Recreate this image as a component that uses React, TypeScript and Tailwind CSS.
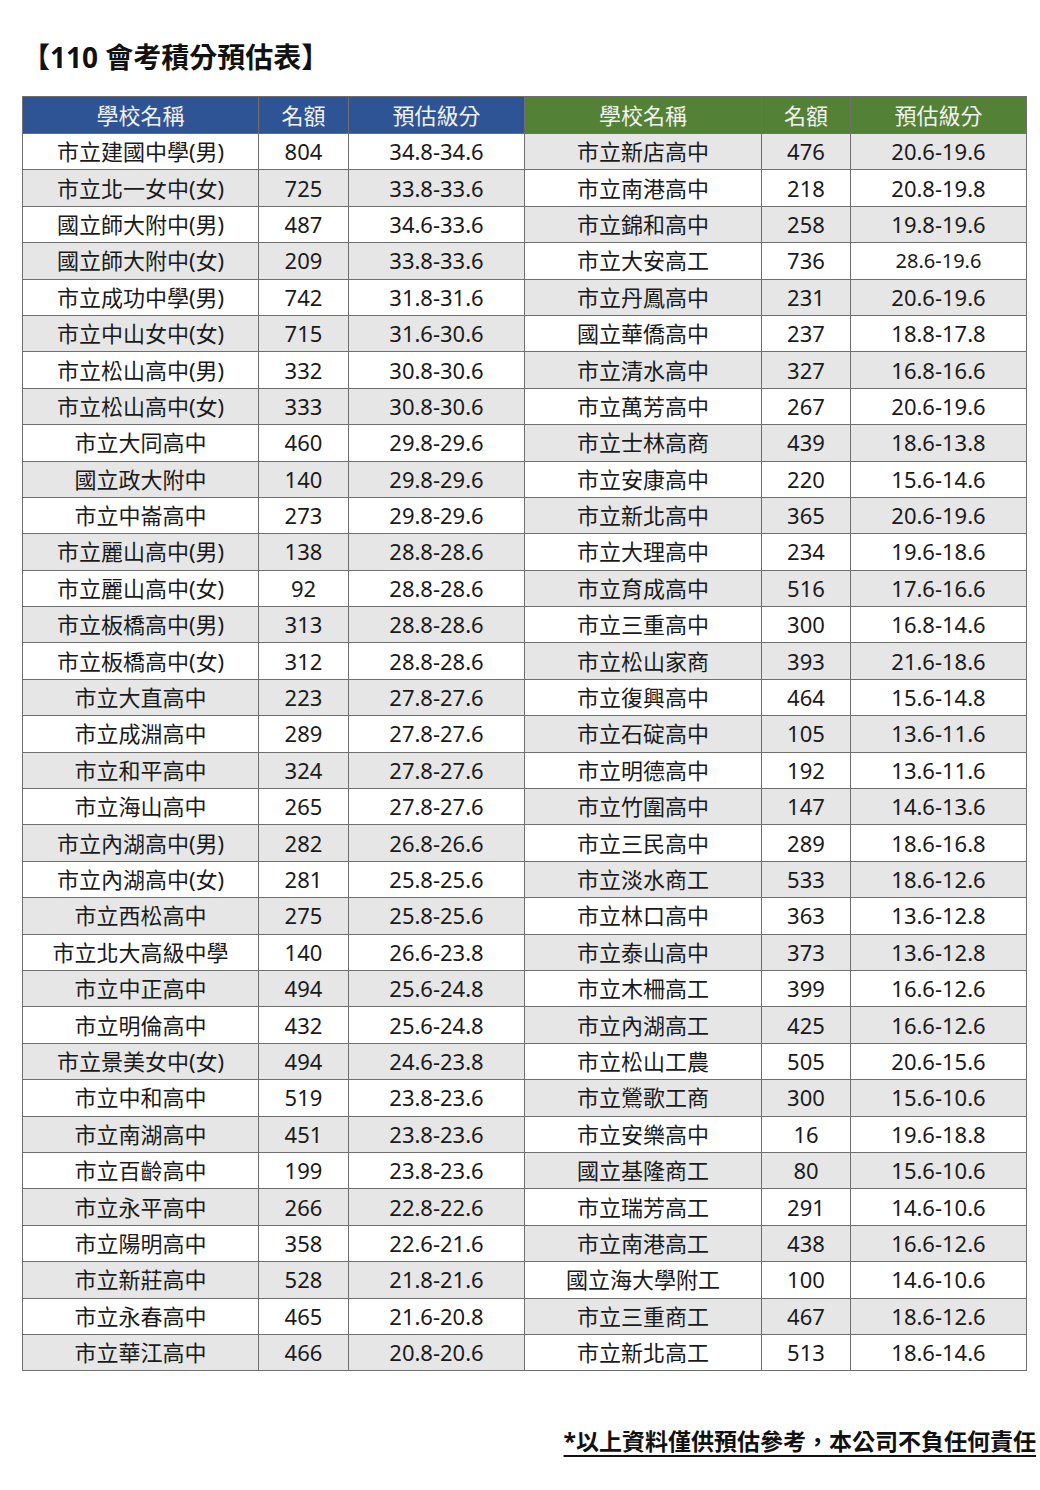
const LEFT: [string, string, string][] = [
  ["市立建國中學(男)", "804", "34.8-34.6"],
  ["市立北一女中(女)", "725", "33.8-33.6"],
  ["國立師大附中(男)", "487", "34.6-33.6"],
  ["國立師大附中(女)", "209", "33.8-33.6"],
  ["市立成功中學(男)", "742", "31.8-31.6"],
  ["市立中山女中(女)", "715", "31.6-30.6"],
  ["市立松山高中(男)", "332", "30.8-30.6"],
  ["市立松山高中(女)", "333", "30.8-30.6"],
  ["市立大同高中", "460", "29.8-29.6"],
  ["國立政大附中", "140", "29.8-29.6"],
  ["市立中崙高中", "273", "29.8-29.6"],
  ["市立麗山高中(男)", "138", "28.8-28.6"],
  ["市立麗山高中(女)", "92", "28.8-28.6"],
  ["市立板橋高中(男)", "313", "28.8-28.6"],
  ["市立板橋高中(女)", "312", "28.8-28.6"],
  ["市立大直高中", "223", "27.8-27.6"],
  ["市立成淵高中", "289", "27.8-27.6"],
  ["市立和平高中", "324", "27.8-27.6"],
  ["市立海山高中", "265", "27.8-27.6"],
  ["市立內湖高中(男)", "282", "26.8-26.6"],
  ["市立內湖高中(女)", "281", "25.8-25.6"],
  ["市立西松高中", "275", "25.8-25.6"],
  ["市立北大高級中學", "140", "26.6-23.8"],
  ["市立中正高中", "494", "25.6-24.8"],
  ["市立明倫高中", "432", "25.6-24.8"],
  ["市立景美女中(女)", "494", "24.6-23.8"],
  ["市立中和高中", "519", "23.8-23.6"],
  ["市立南湖高中", "451", "23.8-23.6"],
  ["市立百齡高中", "199", "23.8-23.6"],
  ["市立永平高中", "266", "22.8-22.6"],
  ["市立陽明高中", "358", "22.6-21.6"],
  ["市立新莊高中", "528", "21.8-21.6"],
  ["市立永春高中", "465", "21.6-20.8"],
  ["市立華江高中", "466", "20.8-20.6"],
];

const RIGHT: [string, string, string][] = [
  ["市立新店高中", "476", "20.6-19.6"],
  ["市立南港高中", "218", "20.8-19.8"],
  ["市立錦和高中", "258", "19.8-19.6"],
  ["市立大安高工", "736", "28.6-19.6"],
  ["市立丹鳳高中", "231", "20.6-19.6"],
  ["國立華僑高中", "237", "18.8-17.8"],
  ["市立清水高中", "327", "16.8-16.6"],
  ["市立萬芳高中", "267", "20.6-19.6"],
  ["市立士林高商", "439", "18.6-13.8"],
  ["市立安康高中", "220", "15.6-14.6"],
  ["市立新北高中", "365", "20.6-19.6"],
  ["市立大理高中", "234", "19.6-18.6"],
  ["市立育成高中", "516", "17.6-16.6"],
  ["市立三重高中", "300", "16.8-14.6"],
  ["市立松山家商", "393", "21.6-18.6"],
  ["市立復興高中", "464", "15.6-14.8"],
  ["市立石碇高中", "105", "13.6-11.6"],
  ["市立明德高中", "192", "13.6-11.6"],
  ["市立竹圍高中", "147", "14.6-13.6"],
  ["市立三民高中", "289", "18.6-16.8"],
  ["市立淡水商工", "533", "18.6-12.6"],
  ["市立林口高中", "363", "13.6-12.8"],
  ["市立泰山高中", "373", "13.6-12.8"],
  ["市立木柵高工", "399", "16.6-12.6"],
  ["市立內湖高工", "425", "16.6-12.6"],
  ["市立松山工農", "505", "20.6-15.6"],
  ["市立鶯歌工商", "300", "15.6-10.6"],
  ["市立安樂高中", "16", "19.6-18.8"],
  ["國立基隆商工", "80", "15.6-10.6"],
  ["市立瑞芳高工", "291", "14.6-10.6"],
  ["市立南港高工", "438", "16.6-12.6"],
  ["國立海大學附工", "100", "14.6-10.6"],
  ["市立三重商工", "467", "18.6-12.6"],
  ["市立新北高工", "513", "18.6-14.6"],
];

const FONT = { fontFamily: '"Noto Sans", "Noto Sans CJK TC", sans-serif' };

function HeadCells({ bg }: { bg: string }) {
  return (
    <>
      <th className={`${bg} border border-[#6f6f6f] font-normal text-[#f2f2f2]`}>學校名稱</th>
      <th className={`${bg} border border-[#6f6f6f] font-normal text-[#f2f2f2]`}>名額</th>
      <th className={`${bg} border border-[#6f6f6f] font-normal text-[#f2f2f2]`}>預估級分</th>
    </>
  );
}

export default function App() {
  return (
    <div className="w-[1040px] min-h-[1490px] bg-white pl-[22px] text-[#1a1a1a]" style={FONT}>
      <h1 className="pt-[38px] text-[28px] font-bold leading-[38px] text-[#111]">【110 會考積分預估表】</h1>

      <table className="mt-[20px] w-[1004px] table-fixed border-collapse border border-[#5f5f5f] text-center text-[22px]">
        <colgroup>
          <col className="w-[236px]" />
          <col className="w-[90px]" />
          <col className="w-[176px]" />
          <col className="w-[237px]" />
          <col className="w-[89px]" />
          <col className="w-[176px]" />
        </colgroup>
        <thead>
          <tr className="h-[37px]">
            <HeadCells bg="bg-[#2f5496]" />
            <HeadCells bg="bg-[#538135]" />
          </tr>
        </thead>
        <tbody>
          {LEFT.map((l, i) => {
            const r = RIGHT[i];
            const leftBg = i % 2 === 1 ? "bg-[#e6e6e6]" : "bg-white";
            const rightBg = i % 2 === 0 ? "bg-[#e6e6e6]" : "bg-white";
            return (
              <tr key={i} className="h-[36.4px]">
                <td className={`${leftBg} border border-[#6f6f6f] whitespace-nowrap`}>{l[0]}</td>
                <td className={`${leftBg} border border-[#6f6f6f]`}>{l[1]}</td>
                <td className={`${leftBg} border border-[#6f6f6f]`}>{l[2]}</td>
                <td className={`${rightBg} border border-[#6f6f6f] whitespace-nowrap`}>{r[0]}</td>
                <td className={`${rightBg} border border-[#6f6f6f]`}>{r[1]}</td>
                <td className={`${rightBg} border border-[#6f6f6f] ${i === 3 ? "text-[20px]" : ""}`}>{r[2]}</td>
              </tr>
            );
          })}
        </tbody>
      </table>

      <div className="mt-[56px] flex justify-end pr-[4px]">
        <p className="text-[23px] font-bold leading-[28px] text-[#111] underline decoration-2 underline-offset-[5px]">
          *以上資料僅供預估參考，本公司不負任何責任
        </p>
      </div>
    </div>
  );
}
